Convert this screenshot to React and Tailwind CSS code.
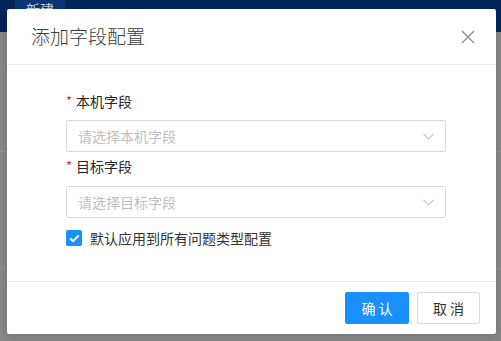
import React from 'react';

const font = { fontFamily: '"Noto Sans CJK SC", "Noto Sans", sans-serif' };

const Chevron = () => (
  <svg width="11" height="7" viewBox="0 0 11 7" fill="none">
    <polyline points="0.5,0.8 5.5,5.8 10.5,0.8" stroke="#bfbfbf" strokeWidth="1.1" />
  </svg>
);

const SelectBox = ({ placeholder }) => (
  <div className="flex h-[32px] w-[380px] items-center justify-between rounded-[2px] border border-[#d9d9d9] bg-white pl-[11px] pr-[11px]">
    <span className="text-[14px] text-[#bfbfbf]">{placeholder}</span>
    <Chevron />
  </div>
);

const Label = ({ children }) => (
  <div className="flex h-[22px] items-center text-[14px] text-[#262626]">
    <span className="mr-[4px] text-[13px] text-[#f5222d]">*</span>
    {children}
  </div>
);

export default function App() {
  return (
    <div className="relative h-[341px] w-[501px] overflow-hidden bg-[#878787]" style={font}>
      {/* page behind the mask */}
      <div className="flex h-[32px] items-start bg-[#03255a] pl-[15px]">
        <div className="-mt-[6px] flex h-[30px] w-[50px] items-center justify-center bg-[#0a3676] text-[14px] text-[#c9d2e0]">
          新建
        </div>
      </div>
      <div className="mt-[119px] h-px bg-[#939393]" />
      <div className="mt-[116px] h-px bg-[#939393]" />

      {/* modal */}
      <div className="absolute left-[7px] top-[9px] flex h-[325px] w-[489px] flex-col rounded-[2px] bg-white shadow-[0_2px_8px_rgba(0,0,0,0.15)]">
        <div className="flex h-[56px] items-center justify-between border-b border-[#e8e8e8] pl-[24px]">
          <span className="text-[19px] font-light text-[#3d3d3d]">添加字段配置</span>
          <div className="flex h-[56px] w-[56px] items-center justify-center">
            <svg width="14" height="14" viewBox="0 0 14 14">
              <path d="M1 1L13 13M13 1L1 13" stroke="#8c8c8c" strokeWidth="1.3" />
            </svg>
          </div>
        </div>

        <div className="flex flex-1 flex-col pl-[59px] pt-[25px]">
          <Label>本机字段</Label>
          <div className="mt-[8px]">
            <SelectBox placeholder="请选择本机字段" />
          </div>
          <div className="mt-[3px]">
            <Label>目标字段</Label>
          </div>
          <div className="mt-[9px]">
            <SelectBox placeholder="请选择目标字段" />
          </div>
          <div className="mt-[9px] flex h-[22px] items-center">
            <div className="flex h-[16px] w-[16px] items-center justify-center rounded-[2px] bg-[#1890ff]">
              <svg width="11" height="9" viewBox="0 0 11 9" fill="none">
                <polyline points="1.2,4.6 4,7.2 9.8,1.4" stroke="#fff" strokeWidth="2" />
              </svg>
            </div>
            <span className="ml-[8px] text-[14px] text-[#333]">默认应用到所有问题类型配置</span>
          </div>
        </div>

        <div className="flex h-[53px] items-center justify-end gap-[8px] border-t border-[#e8e8e8] pr-[16px]">
          <button className="h-[32px] w-[64px] rounded-[2px] bg-[#1890ff] text-[14px] text-white">确 认</button>
          <button className="h-[32px] w-[63px] rounded-[2px] border border-[#d9d9d9] bg-white text-[14px] text-[#333]">取 消</button>
        </div>
      </div>
    </div>
  );
}
